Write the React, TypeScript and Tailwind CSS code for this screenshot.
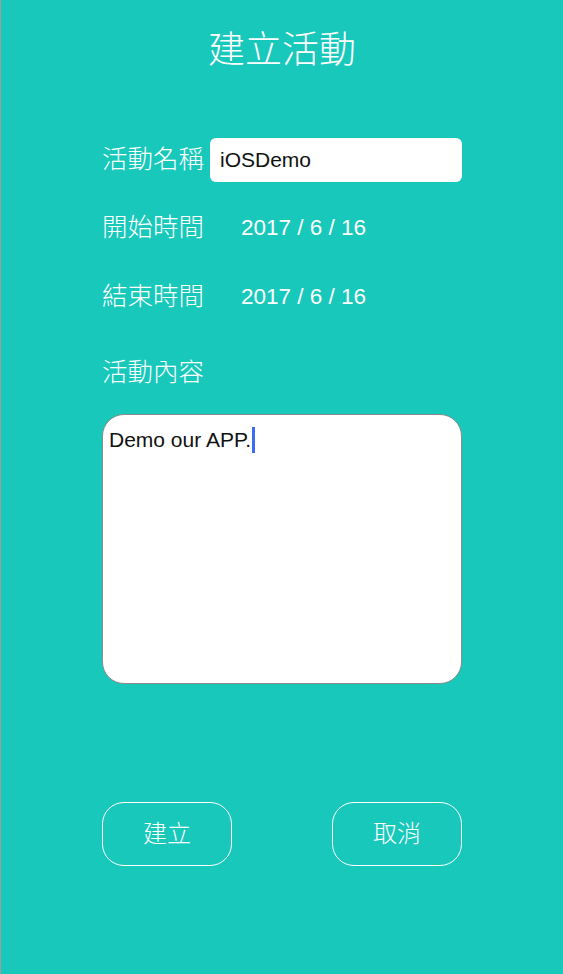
const cjk = "font-['Liberation_Sans','Noto_Sans_CJK_TC',sans-serif]";

function Label({ text }: { text: string }) {
    return <div className={`${cjk} w-[101px] shrink-0 whitespace-nowrap text-[25.5px] font-light leading-none text-white`}>{text}</div>;
}

function DateRow({ label, date }: { label: string; date: string }) {
    return (
        <div className="flex h-[44px] items-center">
            <Label text={label} />
            <div className={`${cjk} ml-[38px] whitespace-nowrap text-[22.5px] text-white`}>{date}</div>
        </div>
    );
}

export default function App() {
    return (
        <div className="flex min-h-[974px] w-[563px] border-l border-[#9d9d9d] bg-[#17c8bb]">
            <div className="flex flex-1 flex-col px-[101px]">
                <h1 className={`${cjk} mt-[29px] h-[44px] whitespace-nowrap text-center text-[37px] font-light leading-[44px] text-white`}>建立活動</h1>

                <div className="mt-[65px] flex flex-col">
                    <div className="flex h-[44px] items-center">
                        <Label text="活動名稱" />
                        <div className="ml-[7px] flex h-[44px] flex-1 items-center rounded-[6px] bg-white pl-[10px]">
                            <span className={`${cjk} text-[21px] text-[#111]`}>iOSDemo</span>
                        </div>
                    </div>
                    <div className="mt-[24px]">
                        <DateRow label="開始時間" date="2017 / 6 / 16" />
                    </div>
                    <div className="mt-[25px]">
                        <DateRow label="結束時間" date="2017 / 6 / 16" />
                    </div>
                </div>

                <div className="mt-[32px] flex h-[44px] items-center">
                    <Label text="活動內容" />
                </div>

                <div className="mt-[19px] h-[270px] rounded-[22px] border border-[#8a8a8a] bg-white px-[6px] pt-[11px]">
                    <div className="flex items-center">
                        <span className={`${cjk} text-[21px] leading-[28px] text-[#111]`}>Demo our APP.</span>
                        <span className="ml-px h-[26px] w-[3px] bg-[#3b6cf6]"></span>
                    </div>
                </div>

                <div className="mt-[118px] flex justify-between">
                    <div className={`${cjk} flex h-[64px] w-[130px] items-center justify-center rounded-[22px] border border-white text-[24px] font-light text-white`}>建立</div>
                    <div className={`${cjk} flex h-[64px] w-[130px] items-center justify-center rounded-[22px] border border-white text-[24px] font-light text-white`}>取消</div>
                </div>
            </div>
        </div>
    );
}
